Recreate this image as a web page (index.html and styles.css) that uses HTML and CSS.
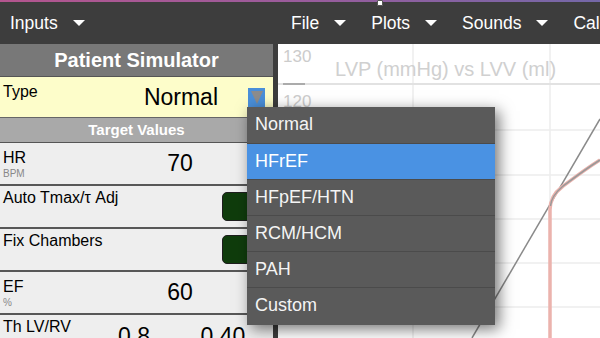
FILE: index.html
```html
<!DOCTYPE html>
<html lang="en">

<head>
    <meta charset="UTF-8">
    <meta name="viewport" content="width=device-width, initial-scale=1.0">
    <title>Patient Simulator</title>
    <link rel="stylesheet" href="styles.css">
</head>

<body>
    <div id="app">
        <div id="topline"></div>
        <div id="handle"></div>
        <div id="menubar">
            <div class="left">
                <div class="item">Inputs<span class="caret"></span></div>
            </div>
            <div class="item">File<span class="caret"></span></div>
            <div class="item">Plots<span class="caret"></span></div>
            <div class="item">Sounds<span class="caret"></span></div>
            <div class="item">Calc<span class="caret"></span></div>
        </div>
        <div id="main">
            <div id="panel">
                <div class="panel-title">Patient Simulator</div>
                <div class="type-row">
                    <div class="type-label">Type</div>
                    <div class="type-value">Normal</div>
                    <div class="select-btn"><span class="tri"></span></div>
                </div>
                <div class="section-title">Target Values</div>
                <div class="row">
                    <div class="label two">HR<div class="unit">BPM</div></div>
                    <div class="value">70</div>
                </div>
                <div class="row">
                    <div class="label">Auto Tmax/τ Adj</div>
                    <div></div>
                    <div class="toggle"></div>
                </div>
                <div class="row">
                    <div class="label">Fix Chambers</div>
                    <div></div>
                    <div class="toggle"></div>
                </div>
                <div class="row">
                    <div class="label two">EF<div class="unit">%</div></div>
                    <div class="value">60</div>
                </div>
                <div class="row pair">
                    <div class="label">Th LV/RV</div>
                    <div class="value">0.8</div>
                    <div class="value">0.40</div>
                </div>
            </div>
            <div id="divider"></div>
            <div id="chart">
                <svg width="322" height="294" viewBox="0 0 322 294">
                    <g stroke="#ececec" stroke-width="1.5">
                        <line x1="0" y1="86" x2="322" y2="86" />
                        <line x1="0" y1="131" x2="322" y2="131" />
                        <line x1="0" y1="175" x2="322" y2="175" />
                        <line x1="0" y1="219" x2="322" y2="219" />
                        <line x1="0" y1="263" x2="322" y2="263" />
                        <line x1="135" y1="0" x2="135" y2="294" />
                        <line x1="272" y1="0" x2="272" y2="294" />
                    </g>
                    <line x1="0" y1="40" x2="322" y2="40" stroke="#e2e2e2" stroke-width="2" />
                    <line x1="5" y1="40" x2="27" y2="40" stroke="#999" stroke-width="1.5" />
                    <text x="5" y="18" class="axis">130</text>
                    <text x="5" y="63" class="axis">120</text>
                    <text x="57" y="32" class="chart-title">LVP (mmHg) vs LVV (ml)</text>
                    <line x1="194" y1="294" x2="322" y2="75" stroke="#8a8a8a" stroke-width="1.5" />
                    <path d="M272,294 L272,166 C272,156 276,149 284,143 C292,137 306,126 322,116" fill="none" stroke="#ebb3ad" stroke-width="3.5" />
                    <path d="M272.5,162 C273,155 277,149 284,143 C292,137 306,126 322,116" fill="none" stroke="#999" stroke-width="1.5" />
                </svg>
            </div>
        </div>
        <div id="dropdown">
            <div class="option">Normal</div>
            <div class="option active">HFrEF</div>
            <div class="option">HFpEF/HTN</div>
            <div class="option">RCM/HCM</div>
            <div class="option">PAH</div>
            <div class="option">Custom</div>
        </div>
    </div>
</body>

</html>
```

FILE: styles.css
```css
body {
    margin: 0;
    background-color: #3d3d3d;
    font-family: "Liberation Sans", Arial, sans-serif;
    overflow: hidden;
}

#app {
    width: 600px;
    height: 338px;
    position: relative;
    overflow: hidden;
}

#topline {
    height: 2px;
    background: linear-gradient(to right, #b4558e, #9a5c9c, #7468a8);
}

#handle {
    position: absolute;
    left: 377px;
    top: 0;
    width: 4px;
    height: 4px;
    background-color: white;
    border: 1px solid #555;
    border-radius: 1px;
}

#menubar {
    height: 42px;
    display: flex;
    align-items: center;
    padding-left: 10px;
    background-color: #3d3d3d;
    color: white;
    font-size: 17.5px;
    white-space: nowrap;
}

#menubar .left {
    width: 281px;
    flex-shrink: 0;
}

.item {
    display: flex;
    align-items: center;
    margin-right: 25px;
    flex-shrink: 0;
}

.caret {
    display: inline-block;
    margin-left: 15px;
    border-left: 6.5px solid transparent;
    border-right: 6.5px solid transparent;
    border-top: 6px solid white;
}

#main {
    display: flex;
    height: 294px;
}

#panel {
    width: 273px;
    flex-shrink: 0;
    background-color: #eeeeee;
}

.panel-title {
    height: 32px;
    line-height: 32px;
    text-align: center;
    background-color: #787878;
    color: white;
    font-weight: bold;
    font-size: 20px;
    border-bottom: 1px solid #555;
}

.type-row {
    height: 40px;
    display: flex;
    align-items: center;
    background-color: #fdfdca;
}

.type-label {
    flex: 1;
    align-self: flex-start;
    padding: 6px 0 0 3px;
    font-size: 16px;
}

.type-value {
    font-size: 23px;
    margin-right: 30px;
}

.select-btn {
    width: 17px;
    height: 19px;
    margin-right: 8px;
    background-color: #4a8fd9;
    display: flex;
    align-items: center;
    justify-content: center;
}

.tri {
    border-left: 6px solid transparent;
    border-right: 6px solid transparent;
    border-top: 13px solid #8c8c8c;
}

.section-title {
    height: 24px;
    line-height: 24px;
    text-align: center;
    background-color: #a9a9a9;
    color: white;
    font-weight: bold;
    font-size: 15px;
    border-top: 1px solid #666;
    border-bottom: 1px solid #555;
}

.row {
    height: 41px;
    display: grid;
    grid-template-columns: 140px 80px 53px;
    align-items: center;
    border-bottom: 2px solid #575757;
}

.row.pair {
    grid-template-columns: 95px 78px 100px;
    align-items: start;
}

.label {
    align-self: start;
    padding: 3px 0 0 3px;
    font-size: 16px;
    white-space: nowrap;
}

.label.two {
    align-self: center;
    padding-top: 0;
}

.unit {
    font-size: 10px;
    color: #888;
    margin-top: 1px;
}

.value {
    text-align: center;
    font-size: 23px;
}

.row.pair .value {
    padding-top: 8px;
}

.toggle {
    width: 52px;
    height: 27px;
    margin-left: 2px;
    background-color: #0f3c0c;
    border: 1px solid #1e1e1e;
    border-radius: 5px;
}

#divider {
    width: 5px;
    flex-shrink: 0;
    background-color: #3d3d3d;
}

#chart {
    flex: 1;
    background-color: white;
    overflow: hidden;
}

#chart svg {
    display: block;
}

.axis {
    font-size: 17px;
    fill: #cccccc;
    font-family: "Liberation Sans", Arial, sans-serif;
}

.chart-title {
    font-size: 20px;
    fill: #d0d0d0;
    font-family: "Liberation Sans", Arial, sans-serif;
}

#dropdown {
    position: absolute;
    left: 247px;
    top: 107px;
    width: 248px;
    padding-bottom: 2px;
    background-color: #5a5a5a;
    box-shadow: 4px 4px 14px rgba(0, 0, 0, 0.55);
}

.option {
    height: 35px;
    line-height: 35px;
    padding-left: 8px;
    color: #f4f4f4;
    font-size: 18px;
    border-top: 1px solid #4b4b4b;
}

.option:first-child {
    height: 36px;
    border-top: none;
}

.option.active {
    background-color: #4a92e3;
    color: white;
}
```
